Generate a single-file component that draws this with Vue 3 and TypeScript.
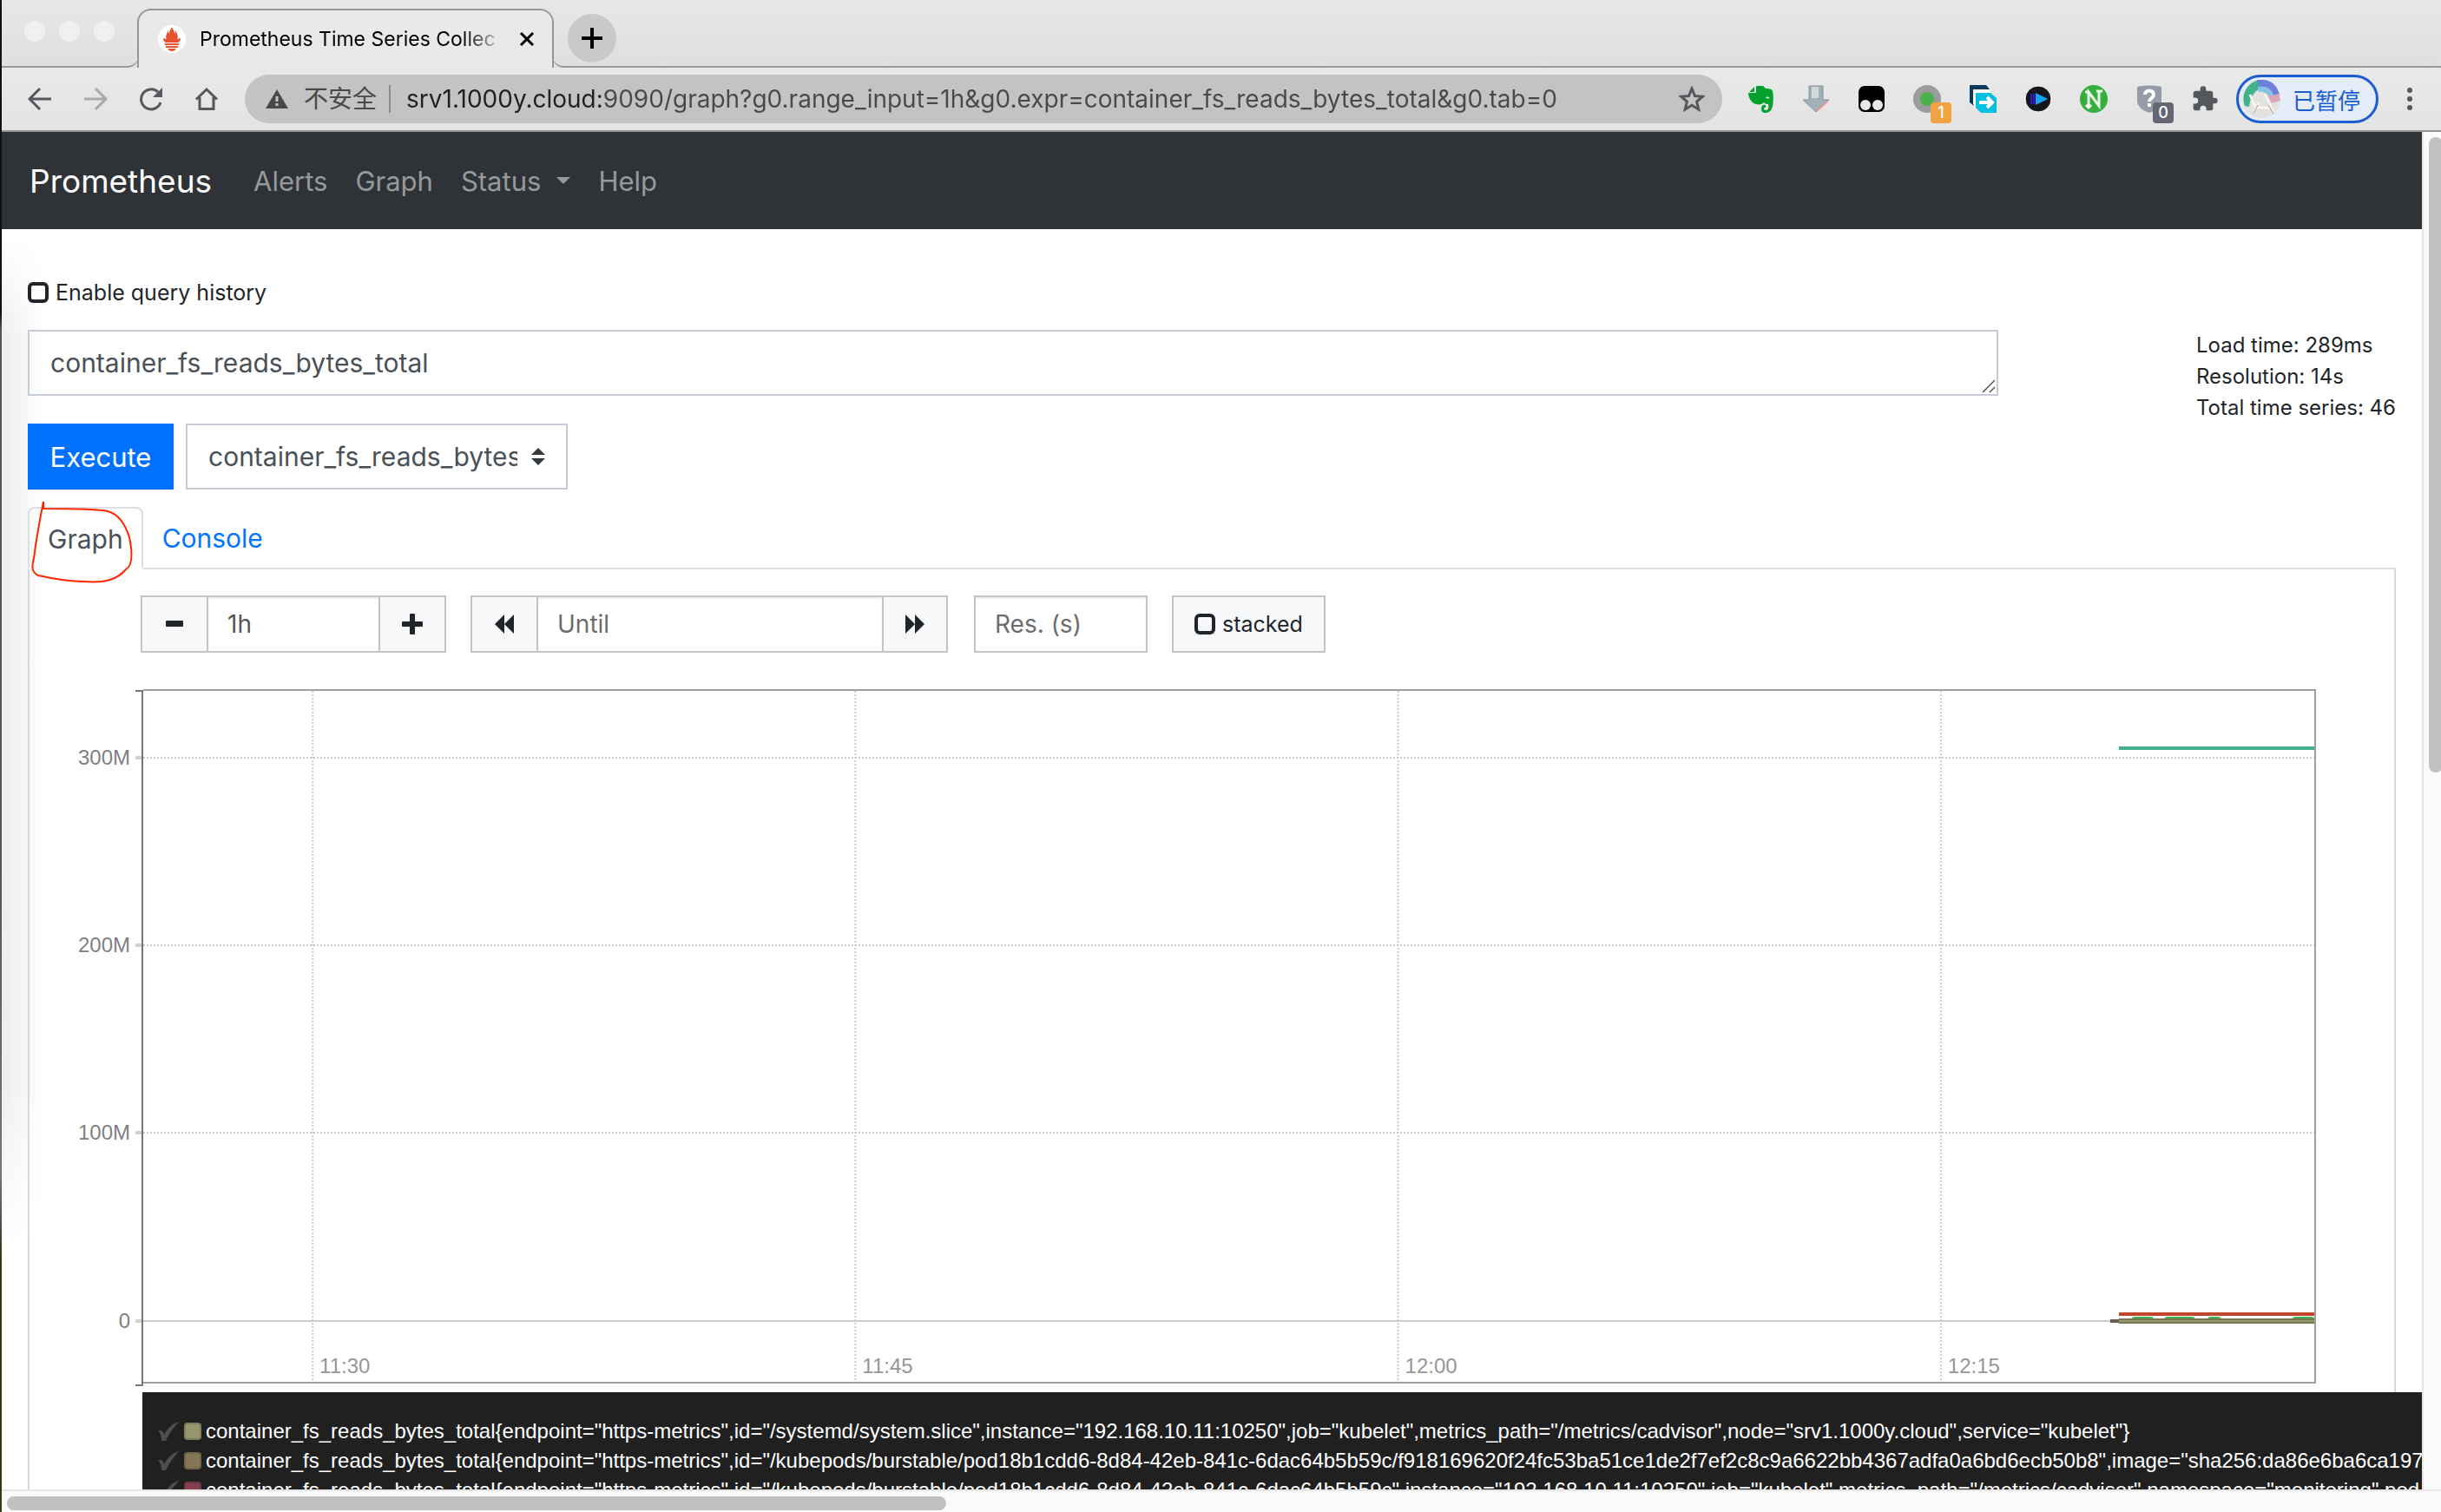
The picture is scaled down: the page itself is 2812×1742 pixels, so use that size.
<script setup lang="ts">
import { ref } from 'vue'

interface Series { color: string; label: string }

const url = ref('srv1.1000y.cloud:9090/graph?g0.range_input=1h&g0.expr=container_fs_reads_bytes_total&g0.tab=0')
const history = ref(false)
const expression = ref('container_fs_reads_bytes_total')
const metric = ref('container_fs_reads_bytes_total')
const range = ref('1h')
const until = ref('')
const resolution = ref('')
const stacked = ref(false)

const stats = ['Load time: 289ms', 'Resolution: 14s', 'Total time series: 46']

const xTicks = [
  { at: '7.8%', label: '11:30' },
  { at: '32.8%', label: '11:45' },
  { at: '57.8%', label: '12:00' },
  { at: '82.8%', label: '12:15' },
]
const yTicks = [
  { y: 79, label: '300M' },
  { y: 295, label: '200M' },
  { y: 511, label: '100M' },
  { y: 728, label: '0' },
]
const bumps = [
  { x: '91.6%', w: '1%' },
  { x: '93.1%', w: '1.4%' },
  { x: '95.1%', w: '0.6%' },
  { x: '99%', w: '1%' },
]

const series: Series[] = [
  {
    color: '#96966c',
    label: 'container_fs_reads_bytes_total{endpoint="https-metrics",id="/systemd/system.slice",instance="192.168.10.11:10250",job="kubelet",metrics_path="/metrics/cadvisor",node="srv1.1000y.cloud",service="kubelet"}',
  },
  {
    color: '#857656',
    label: 'container_fs_reads_bytes_total{endpoint="https-metrics",id="/kubepods/burstable/pod18b1cdd6-8d84-42eb-841c-6dac64b5b59c/f918169620f24fc53ba51ce1de2f7ef2c8c9a6622bb4367adfa0a6bd6ecb50b8",image="sha256:da86e6ba6ca197',
  },
  {
    color: '#85404f',
    label: 'container_fs_reads_bytes_total{endpoint="https-metrics",id="/kubepods/burstable/pod18b1cdd6-8d84-42eb-841c-6dac64b5b59c",instance="192.168.10.11:10250",job="kubelet",metrics_path="/metrics/cadvisor",namespace="monitoring",pod',
  },
]
</script>

<template>
  <div class="window">
    <header class="tabstrip">
      <div class="lights"><i></i><i></i><i></i></div>
      <div class="tab">
        <svg class="favicon" viewBox="0 0 32 32" aria-hidden="true">
          <circle cx="16" cy="16" r="16" fill="#fff" />
          <path fill="#e6522c" d="M16 2c1 3 3 4 3 8 1-1 1-2 1-4 2 4 4 7 2 10l4-1c0 2-1 4-3 5H9c-2-1-3-3-3-5l4 1c-2-3 0-6 2-10 0 2 0 3 1 4 0-4 2-5 3-8zM8 21h16v2H8zM9 24h14v2H9zM11 27h10c-1 2-3 3-5 3s-4-1-5-3z" />
        </svg>
        <span class="tab-title">Prometheus Time Series Collec</span>
        <button class="tab-close" aria-label="Close tab">
          <svg viewBox="0 0 18 18" width="18" height="18"><path d="M2 2l14 14M16 2L2 16" stroke="#000" stroke-width="3" /></svg>
        </button>
      </div>
      <div class="strip-rest">
        <button class="new-tab" aria-label="New tab">
          <svg viewBox="0 0 24 24" width="24" height="24"><path d="M12 0v24M0 12h24" stroke="#000" stroke-width="4" /></svg>
        </button>
      </div>
    </header>

    <div class="toolbar">
      <div class="nav-buttons">
        <button aria-label="Back"><svg viewBox="0 0 28 28"><path d="M27 14H3M14 2L2 14l12 12" fill="none" stroke="#54585c" stroke-width="3" /></svg></button>
        <button aria-label="Forward"><svg viewBox="0 0 28 28"><path d="M1 14h24M14 2l12 12-12 12" fill="none" stroke="#a8a9aa" stroke-width="3" /></svg></button>
        <button aria-label="Reload"><svg viewBox="0 0 28 28"><path d="M25 18A11.500 11.500 0 1 1 22 6" fill="none" stroke="#54585c" stroke-width="3" /><path d="M27 1v11H16z" fill="#54585c" /></svg></button>
        <button aria-label="Home"><svg viewBox="0 0 28 28"><path d="M2 14.500L14 3l12 11.500M6 12v13.500h16V12" fill="none" stroke="#54585c" stroke-width="3" /></svg></button>
      </div>
      <div class="omnibox">
        <svg class="warn" viewBox="0 0 26 24" aria-hidden="true"><path d="M13 1l13 22H0z" fill="#48494b" /><path d="M13 9v6M13 17v3" stroke="#c3c3c3" stroke-width="3" /></svg>
        <span class="insecure">不安全</span>
        <input v-model="url" class="url" type="text" aria-label="Address" spellcheck="false" />
        <button class="star" aria-label="Bookmark">
          <svg viewBox="0 0 30 30" width="30" height="30"><path d="M15 3l3.500 8.500 9 .7-6.900 5.900 2.200 8.900L15 22.200 7.200 27l2.200-8.900-6.900-5.900 9-.7z" fill="none" stroke="#54585c" stroke-width="3" /></svg>
        </button>
      </div>
      <div class="extensions">
        <button aria-label="Evernote">
          <svg viewBox="0 0 32 32"><path fill="#06a02c" d="M11 1h7c2 0 3 2 4 3 3 0 7 0 8 3 1 5 1 12 0 17-1 5-4 8-8 8s-5-2-5-5 2-5 5-4v3c-1 0-2 0-2 1s1 2 2 2c3 0 4-3 3-7-3 0-4-1-5-2-2 3-8 3-12 1-4-3-6-8-6-12h8c1 0 1-1 1-1zM9 2v6H3z" /><path d="M22 15c1-2 4-2 4 1-1-1-3-1-4-1z" fill="#fff" /></svg>
        </button>
        <button aria-label="Downloader">
          <svg viewBox="0 0 32 32"><path fill="#9fb0b7" stroke="#86949a" d="M8 1h16v16h7L16 31 1 17h7z" /><path fill="#d0d9dc" d="M11 2h8v13h-8z" /><path d="M29 19L17 30" stroke="#e89b93" stroke-width="2" /></svg>
        </button>
        <button aria-label="Tampermonkey">
          <svg viewBox="0 0 32 32"><rect x="1" y="1" width="30" height="30" rx="7" fill="#000" /><circle cx="9" cy="23" r="6" fill="#e8e8e8" /><circle cx="23" cy="23" r="6" fill="#e8e8e8" /></svg>
        </button>
        <button aria-label="Recorder">
          <svg viewBox="0 0 32 32"><circle cx="16" cy="16" r="16" fill="#9c9c9c" /><circle cx="16" cy="16" r="8" fill="#48b149" /></svg>
          <b class="badge orange">1</b>
        </button>
        <button aria-label="Share">
          <svg viewBox="0 0 32 32"><path fill="#0b3a5c" d="M1 0h19l4 5H6v19L1 20z" /><path fill="#fff" d="M5 5h18l3 5H10v17l-5-5z" /><path fill="#04bfe0" d="M8 9h17l7 6v17H14l-6-6z" /><path d="M12 20h14M21 14l6 6-6 6" fill="none" stroke="#fff" stroke-width="4" /></svg>
        </button>
        <button aria-label="Player">
          <svg viewBox="0 0 32 32"><circle cx="16" cy="16" r="15" fill="#15171c" stroke="#fff" /><path d="M8 10v12M11 10v12" stroke="#3418e0" stroke-width="2" /><path d="M13 9l14 7-14 7z" fill="#12a4f4" /></svg>
        </button>
        <button aria-label="Notes">
          <svg viewBox="0 0 32 32"><circle cx="16" cy="16" r="16" fill="#35ae3e" /><path d="M10 26V8l12 16V7M6 8h5M19 7h7M7 23l3 3 3-3" fill="none" stroke="#eaf5ea" stroke-width="3" /></svg>
        </button>
        <button aria-label="Blocker">
          <svg viewBox="0 0 32 32"><path d="M2 2c8-2 20-2 28 0v16c0 7-7 12-14 14C9 30 2 25 2 18z" fill="#969ba8" /><path d="M11 11c0-6 10-6 10 0 0 4-5 4-5 8M16 21v4" fill="none" stroke="#fff" stroke-width="4" /></svg>
          <b class="badge grey">0</b>
        </button>
        <button aria-label="Extensions">
          <svg viewBox="0 0 24 24"><path fill="#54585c" d="M20.500 11H19V7c0-1.100-.9-2-2-2h-4V3.500a2.500 2.500 0 0 0-5 0V5H4c-1.100 0-2 .9-2 2v3.800h1.500a2.700 2.700 0 0 1 0 5.400H2V20c0 1.100.9 2 2 2h3.800v-1.500a2.700 2.700 0 0 1 5.400 0V22H17c1.100 0 2-.9 2-2v-4h1.500a2.500 2.500 0 0 0 0-5z" /></svg>
        </button>
      </div>
      <button class="profile">
        <svg viewBox="0 0 44 44" width="44" height="44" aria-hidden="true">
          <circle cx="22" cy="22" r="22" fill="#e2e2e0" />
          <path d="M3 30A22 22 0 0 1 20 0l3 8C14 13 9 20 8 31z" fill="#42b28b" />
          <path d="M17 0c14-2 23 5 26 17l-6 3C34 11 28 7 19 8z" fill="#6f7fdc" />
          <path d="M18 8c10-1 17 4 19 12l-5 3c-2-7-7-10-13-9z" fill="#86c3e4" />
          <path d="M30 19l12-3 2 8-10 3z" fill="#dba6b8" />
          <path d="M9 17l6 14 18 2M13 38l6-12M36 38L26 16" stroke="#f8f4ec" stroke-width="3" fill="none" />
          <path d="M13 39l5-10M36 39l-6-10" stroke="#a4947e" stroke-width="1" />
        </svg>
        <span>已暂停</span>
      </button>
      <button class="menu" aria-label="Menu">
        <svg viewBox="0 0 6 26" width="6" height="26"><circle cx="3" cy="3" r="3" /><circle cx="3" cy="13" r="3" /><circle cx="3" cy="23" r="3" /></svg>
      </button>
    </div>

    <div class="viewport">
      <div class="page">
        <nav class="navbar">
          <a class="brand" href="#">Prometheus</a>
          <a href="#">Alerts</a>
          <a href="#">Graph</a>
          <a class="dropdown" href="#">Status<i class="caret"></i></a>
          <a href="#">Help</a>
        </nav>

        <main>
          <label class="history"><input v-model="history" type="checkbox" /><span>Enable query history</span></label>

          <div class="query-row">
            <div class="expr-wrap">
              <textarea v-model="expression" rows="1" aria-label="Expression" spellcheck="false"></textarea>
              <svg class="grip" viewBox="0 0 16 16" aria-hidden="true"><path d="M1 15L15 1M9 15l6-6" stroke="#555" stroke-width="1.500" /></svg>
            </div>
            <div class="stats"><div v-for="s in stats" :key="s">{{ s }}</div></div>
          </div>

          <div class="actions">
            <button class="execute">Execute</button>
            <div class="select-wrap">
              <select v-model="metric" aria-label="Metric"><option>container_fs_reads_bytes_total</option></select>
              <svg viewBox="0 0 16 20" aria-hidden="true"><path d="M8 0l8 8H0zM8 20l8-8H0z" fill="#343a40" /></svg>
            </div>
          </div>

          <div class="tabs">
            <a class="active" href="#">Graph</a>
            <a href="#">Console</a>
            <svg class="scribble" viewBox="0 0 124 104" aria-hidden="true">
              <path d="M18 2V10C40 10 80 10 92 13C103 16 112 27 117 43C121 62 120 76 113 80C103 92 88 96 64 94C48 94 30 91 12 87C5 83 4 79 7 67C10 44 14 22 18 2" fill="none" stroke="#ff2600" stroke-width="2" />
            </svg>
          </div>

          <section class="panel">
            <div class="controls">
              <div class="group range">
                <button aria-label="Shrink range"><svg viewBox="0 0 24 24"><rect x="2" y="8" width="20" height="7" rx="1" /></svg></button>
                <input v-model="range" type="text" aria-label="Range" />
                <button aria-label="Grow range"><svg viewBox="0 0 24 24"><path d="M9 1q0-1 1-1h4q1 0 1 1v8h8q1 0 1 1v4q0 1-1 1h-8v8q0 1-1 1h-4q-1 0-1-1v-8H1q-1 0-1-1v-4q0-1 1-1h8z" /></svg></button>
              </div>
              <div class="group until">
                <button aria-label="Back in time"><svg viewBox="0 0 24 24"><path d="M12 1v22L1 12zM23 1v22L12 12z" /></svg></button>
                <input v-model="until" type="text" placeholder="Until" aria-label="Until" />
                <button aria-label="Forward in time"><svg viewBox="0 0 24 24"><path d="M1 1v22l11-11zM12 1v22l11-11z" /></svg></button>
              </div>
              <input v-model="resolution" class="res" type="text" placeholder="Res. (s)" aria-label="Resolution" />
              <label class="stacked"><input v-model="stacked" type="checkbox" /><span>stacked</span></label>
            </div>

            <div class="chart">
              <svg class="y-axis" width="131" height="804">
                <text v-for="t in yTicks" :key="t.label" x="116" :y="t.y + 8" text-anchor="end" class="y-label">{{ t.label }}</text>
                <rect v-for="t in yTicks" :key="'r' + t.label" x="122" :y="t.y - 2" width="7" height="4" fill="#d2d2d2" />
                <path d="M122 2h8v800h-8" fill="none" stroke="#777" stroke-width="2" />
              </svg>
              <svg class="plot" height="800" width="100%">
                <template v-for="t in yTicks" :key="t.label">
                  <line x1="0" x2="100%" :y1="t.y - 2" :y2="t.y - 2" stroke="#ccc" stroke-width="2" :stroke-dasharray="t.label === '0' ? 'none' : '2 2'" />
                </template>
                <template v-for="t in xTicks" :key="t.label">
                  <line :x1="t.at" :x2="t.at" y1="0" y2="800" stroke="#ccc" stroke-width="2" stroke-dasharray="2 2" />
                  <text :x="t.at" dx="8" y="786" class="x-label">{{ t.label }}</text>
                </template>
                <line x1="91%" x2="100%" y1="66" y2="66" stroke="#46b08c" stroke-width="4" />
                <line x1="91%" x2="100%" y1="718" y2="718" stroke="#c2452e" stroke-width="4" />
                <rect v-for="b in bumps" :key="b.x" :x="b.x" y="721" :width="b.w" height="4" rx="4" fill="#3fb04f" />
                <line x1="90.6%" x2="91.1%" y1="726" y2="726" stroke="#6d5a50" stroke-width="4" />
                <line x1="91%" x2="100%" y1="726" y2="726" stroke="#77794f" stroke-width="6" />
                <line x1="91%" x2="100%" y1="726" y2="726" stroke="#97976b" stroke-width="2" />
              </svg>
            </div>

            <ul class="legend">
              <li v-for="s in series" :key="s.label">
                <svg viewBox="0 0 24 22" aria-hidden="true"><path d="M0 11c3-2 6-1 7 4C11 8 16 2 24 0 18 7 13 13 9 22H4C4 17 3 13 0 11z" fill="#4e4e4e" /></svg>
                <i :style="{ background: s.color }"></i>
                <span>{{ s.label }}</span>
              </li>
            </ul>
          </section>
        </main>
      </div>
      <div class="vbar"><i></i></div>
      <div class="hbar"><i></i></div>
    </div>
  </div>
</template>

<style>
body {
  margin: 0;
  overflow: hidden;
}
</style>

<style scoped>
* {
  box-sizing: border-box;
}
.window {
  height: 100vh;
  display: flex;
  flex-direction: column;
  padding-left: 2px;
  background: linear-gradient(#111 0 360px, #555 380px 1000px, #777 1350px, #34371c 1450px);
  font-family: Inter, "Noto Sans CJK SC", sans-serif;
  color: #212529;
}
button {
  border: 0;
  padding: 0;
  background: none;
  font: inherit;
  display: flex;
  align-items: center;
  justify-content: center;
}
a {
  text-decoration: none;
}
input,
textarea,
select {
  font: inherit;
  margin: 0;
  border-radius: 0;
  outline: 0;
}

/* tab strip */
.tabstrip {
  flex: none;
  height: 78px;
  display: flex;
  background: linear-gradient(#e7e7e7, #dfdfdf);
}
.lights {
  width: 158px;
  display: flex;
  gap: 16px;
  padding: 24px 0 0 26px;
  border-bottom: 2px solid #979797;
  border-bottom-right-radius: 14px;
}
.lights i {
  width: 24px;
  height: 24px;
  border-radius: 50%;
  background: #f0f0f0;
}
.tab {
  width: 480px;
  margin: 10px 0 0 -2px;
  height: 68px;
  padding: 0 20px 0 22px;
  display: flex;
  align-items: center;
  border: 2px solid #979797;
  border-bottom: 0;
  border-radius: 16px 16px 0 0;
  background: #e9e9e9;
}
.favicon {
  width: 32px;
  height: 32px;
}
.tab-title {
  flex: 1;
  margin: 0 16px;
  overflow: hidden;
  white-space: nowrap;
  font-size: 23px;
  color: #000;
  mask-image: linear-gradient(90deg, #000 86%, transparent);
}
.strip-rest {
  flex: 1;
  margin-left: -2px;
  padding: 16px 0 0 18px;
  border-bottom: 2px solid #979797;
  border-bottom-left-radius: 14px;
}
.new-tab {
  width: 56px;
  height: 56px;
  border-radius: 50%;
  background: #c9c9c9;
}

/* toolbar */
.toolbar {
  flex: none;
  height: 74px;
  display: flex;
  align-items: center;
  padding: 0 0 0 12px;
  background: linear-gradient(#e9e9e9, #e3e3e3);
  border-bottom: 2px solid #949494;
}
.nav-buttons {
  display: flex;
  margin-right: 12px;
}
.nav-buttons button {
  width: 64px;
  height: 56px;
}
.nav-buttons svg {
  width: 28px;
  height: 28px;
}
.omnibox {
  flex: 1;
  height: 56px;
  display: flex;
  align-items: center;
  padding: 0 20px 0 24px;
  border-radius: 28px;
  background: #c3c3c3;
  font-size: 28px;
  color: #48494b;
}
.warn {
  width: 26px;
  height: 24px;
  margin-right: 18px;
}
.insecure {
  padding-right: 14px;
  border-right: 2px solid #8c8c8c;
  line-height: 32px;
}
.url {
  flex: 1;
  min-width: 0;
  height: 56px;
  margin-left: 18px;
  padding: 0;
  border: 0;
  color: transparent;
  background: linear-gradient(90deg, #202124 225px, #48494b 225px);
  background-clip: text;
}
.extensions {
  display: flex;
  margin: 0 4px 0 12px;
}
.extensions button {
  position: relative;
  width: 64px;
  height: 56px;
}
.extensions svg {
  width: 32px;
  height: 32px;
}
.badge {
  position: absolute;
  left: 36px;
  bottom: 0;
  width: 24px;
  height: 24px;
  border-radius: 4px;
  font-size: 18px;
  font-weight: 500;
  line-height: 24px;
  text-align: center;
  color: #fff;
}
.orange {
  background: #f0a343;
}
.grey {
  background: #656573;
}
.profile {
  width: 164px;
  height: 56px;
  justify-content: flex-start;
  gap: 14px;
  padding-left: 4px;
  border: 3px solid #1b5cd0;
  border-radius: 28px;
  background: #e4ecf8;
  color: #1b5cd0;
  font-size: 26px;
}
.menu {
  width: 72px;
  height: 56px;
  fill: #54585c;
}

/* page */
.viewport {
  flex: 1;
  min-height: 0;
  display: grid;
  grid-template: minmax(0, 1fr) 26px / minmax(0, 1fr) 22px;
  background: #fafafa;
}
.page {
  overflow: hidden;
  background:
    linear-gradient(#fff, transparent) 0 120px / 50px 120px no-repeat,
    linear-gradient(transparent, #fff) 0 1100px / 50px 180px no-repeat,
    linear-gradient(90deg, rgba(0, 0, 0, 0.07), transparent) 0 120px / 50px 1160px no-repeat,
    #fff;
}
.vbar {
  overflow: hidden;
  padding: 6px 0 0 6px;
  border-left: 2px solid #e6e6e6;
}
.vbar i {
  display: block;
  width: 16px;
  height: 47%;
  border-radius: 8px;
  background: #c1c1c1;
}
.hbar {
  grid-column: 1 / -1;
  padding: 6px 0 0 6px;
  border-top: 2px solid #e6e6e6;
}
.hbar i {
  display: block;
  width: 38.6%;
  height: 16px;
  border-radius: 8px;
  background: #c1c1c1;
}
.navbar {
  height: 112px;
  display: flex;
  align-items: center;
  gap: 32px;
  padding: 0 32px;
  background: #2f3337;
  font-size: 31px;
}
.navbar a {
  color: #97999b;
}
.navbar .brand {
  margin-right: 16px;
  font-size: 37px;
  color: #fff;
}
.dropdown {
  display: flex;
  align-items: center;
}
.caret {
  margin-left: 18px;
  border: 8px solid transparent;
  border-top-color: #97999b;
  border-bottom: 0;
}
main {
  padding: 54px 30px 0;
}
.history,
.stacked {
  display: flex;
  align-items: center;
  gap: 8px;
  font-size: 25px;
}
.history {
  width: max-content;
  height: 38px;
}
input[type="checkbox"] {
  appearance: none;
  width: 24px;
  height: 24px;
  border: 4px solid #212529;
  border-radius: 6px;
}
.query-row {
  display: grid;
  grid-template-columns: minmax(0, 10fr) minmax(0, 2fr);
  gap: 4px;
  margin-top: 24px;
  height: 76px;
}
.expr-wrap {
  position: relative;
  display: flex;
  height: 76px;
}
textarea {
  flex: 1;
  height: 76px;
  padding: 12px 24px;
  border: 2px solid #c5ccd5;
  background: transparent;
  color: #495057;
  font-size: 30px;
  line-height: 48px;
  resize: none;
}
.grip {
  position: absolute;
  right: 3px;
  bottom: 3px;
  width: 16px;
  height: 16px;
}
.stats {
  justify-self: end;
  font-size: 24px;
  line-height: 36px;
  white-space: nowrap;
}
.actions {
  display: flex;
  gap: 14px;
  margin-top: 32px;
  font-size: 30px;
}
.execute {
  width: 168px;
  height: 76px;
  background: #0070ff;
  color: #fff;
  font-size: 31px;
}
.select-wrap {
  position: relative;
  width: 440px;
  height: 76px;
}
select {
  appearance: none;
  width: 100%;
  height: 100%;
  padding: 0 56px 0 24px;
  border: 2px solid #c5ccd5;
  background: #fff;
  color: #495057;
}
.select-wrap svg {
  position: absolute;
  right: 26px;
  top: 28px;
  width: 16px;
  height: 20px;
}
.tabs {
  position: relative;
  display: flex;
  height: 72px;
  margin-top: 20px;
  border-bottom: 2px solid #dbdfe3;
  font-size: 30px;
  line-height: 72px;
}
.tabs a {
  height: 72px;
  padding: 0 22px;
  color: #0075ff;
}
.tabs .active {
  padding: 0 21px;
  border: 2px solid #dbdfe3;
  border-bottom-color: #fff;
  border-radius: 8px 8px 0 0;
  line-height: 70px;
  color: #495057;
}
.scribble {
  position: absolute;
  left: 0;
  top: -8px;
  width: 124px;
  height: 104px;
}
.panel {
  padding-top: 30px;
  border: 2px solid #d8d8d8;
  border-width: 0 2px;
}
.controls {
  display: flex;
  margin-left: 128px;
  font-size: 28px;
}
.group {
  display: flex;
  height: 66px;
  margin-right: 28px;
  border: 2px solid #c4c4c4;
}
.range {
  width: 352px;
}
.until {
  width: 550px;
}
.group button {
  flex: none;
  width: 74px;
  background: #f7f8fa;
}
.group.until button:last-child {
  width: 72px;
}
.group svg {
  width: 24px;
  height: 24px;
  fill: #212529;
}
.controls input[type="text"] {
  min-width: 0;
  flex: 1;
  padding: 0 22px;
  border: 2px solid #c4c4c4;
  border-width: 0 2px;
  background: #fff;
  box-shadow: inset 0 2px 2px rgba(0, 0, 0, 0.08);
  color: #555;
}
.controls input[type="text"].res {
  flex: none;
  width: 200px;
  margin: 0 28px 0 2px;
  border-width: 2px;
}
.controls input::placeholder {
  color: #6c6c6c;
  opacity: 1;
}
.stacked {
  padding: 0 24px;
  border: 2px solid #c4c4c4;
  background: #f7f8fa;
}
.chart {
  display: grid;
  grid-template-columns: 131px minmax(0, 1fr);
  margin: 42px 90px 0 0;
  height: 800px;
  font-family: "Liberation Sans", Arial, sans-serif;
}
.y-label {
  font-size: 24px;
  fill: #808080;
}
.x-label {
  font-size: 24px;
  fill: #969696;
}
.plot {
  border: 2px solid #9f9f9f;
  border-left: 0;
}
.legend {
  width: max-content;
  min-width: 100%;
  margin: 10px 0 0 130px;
  padding: 28px 18px 10px;
  list-style: none;
  background: #202020;
  color: #fff;
  font-family: "Liberation Sans", Arial, sans-serif;
  font-size: 24px;
  line-height: 34px;
  white-space: nowrap;
}
.legend li {
  display: flex;
  align-items: center;
  height: 34px;
}
.legend svg {
  width: 24px;
  height: 22px;
}
.legend i {
  width: 20px;
  height: 20px;
  margin: 0 5px 0 6px;
  border: 2px solid rgba(0, 0, 0, 0.15);
  border-radius: 4px;
}
</style>
